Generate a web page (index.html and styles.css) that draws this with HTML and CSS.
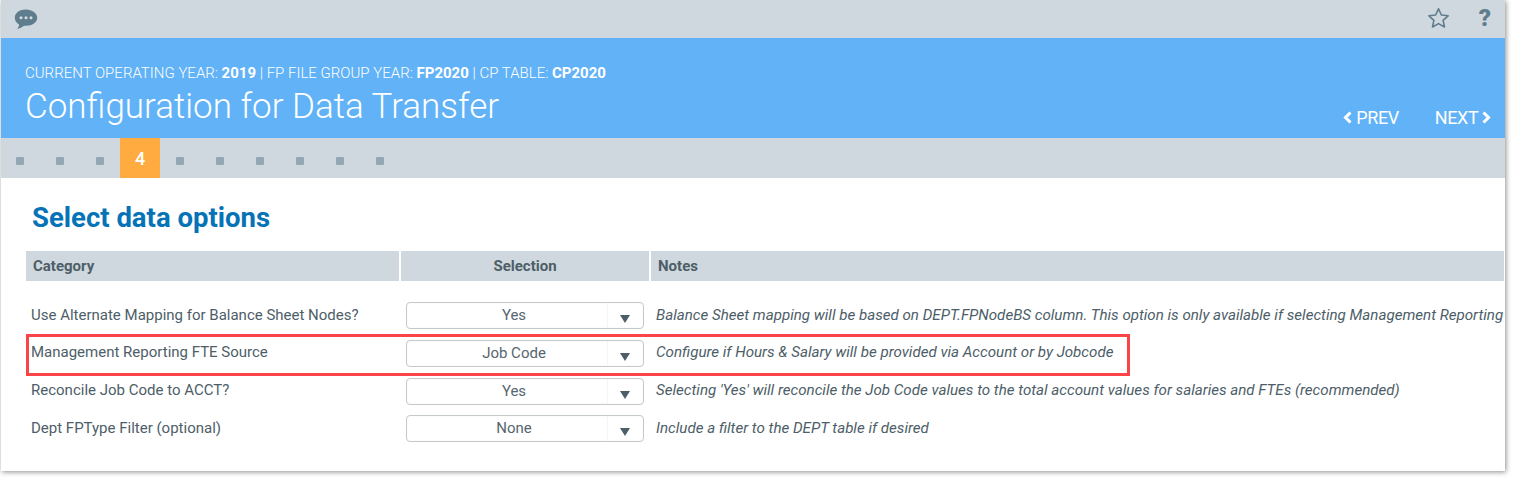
FILE: index.html
```html
<!DOCTYPE html>
<html lang="en">
<head>
  <meta charset="UTF-8" />
  <title>Configuration for Data Transfer</title>
  <link rel="stylesheet" href="styles.css">
</head>
<body>
  <div class="window">
    <div class="topbar">
      <svg class="chat-icon" width="24" height="21" viewBox="0 0 24 21">
        <path d="M12 0.5C5.6 0.5 0.8 3.9 0.8 8.8c0 3 1.8 5.4 4.4 6.9-.2 1.5-1 3-2.1 4 2.6-.2 5.1-1.400 6.900-3 .7.1 1.300.1 2 .1 6.300 0 11.200-3.500 11.200-8S18.300.5 12 .5z" fill="#5f7d8c"/>
        <circle cx="7" cy="8.700" r="1.500" fill="#d5dde2"/>
        <circle cx="12" cy="8.700" r="1.500" fill="#d5dde2"/>
        <circle cx="17" cy="8.700" r="1.500" fill="#d5dde2"/>
      </svg>
      <div class="top-actions">
        <svg class="star-icon" width="23" height="21" viewBox="0 0 23 21">
          <path d="M11.500 1.800l2.900 6.200 6.700.8-5 4.600 1.400 6.600-6-3.400-6 3.400 1.400-6.600-5-4.600 6.700-.8z" fill="none" stroke="#5f7d8c" stroke-width="1.600" stroke-linejoin="round"/>
        </svg>
        <span class="help">?</span>
      </div>
    </div>

    <div class="header">
      <div class="header-text">
        <div class="meta">CURRENT OPERATING YEAR: <b>2019</b> | FP FILE GROUP YEAR: <b>FP2020</b> | CP TABLE: <b>CP2020</b></div>
        <h1>Configuration for Data Transfer</h1>
      </div>
      <div class="pager">
        <span class="pager-link">
          <svg width="9" height="13" viewBox="0 0 9 13"><path d="M7.500 1.500L2.500 6.500l5 5" fill="none" stroke="#fff" stroke-width="3"/></svg>
          PREV
        </span>
        <span class="pager-link">
          NEXT
          <svg width="9" height="13" viewBox="0 0 9 13"><path d="M1.500 1.500l5 5-5 5" fill="none" stroke="#fff" stroke-width="3"/></svg>
        </span>
      </div>
    </div>

    <div class="steps">
      <div class="step"><i></i></div>
      <div class="step"><i></i></div>
      <div class="step"><i></i></div>
      <div class="step active">4</div>
      <div class="step"><i></i></div>
      <div class="step"><i></i></div>
      <div class="step"><i></i></div>
      <div class="step"><i></i></div>
      <div class="step"><i></i></div>
      <div class="step"><i></i></div>
    </div>

    <div class="content">
      <h2>Select data options</h2>

      <div class="table-head">
        <div class="th">Category</div>
        <div class="th center">Selection</div>
        <div class="th">Notes</div>
      </div>

      <div class="rows">
        <div class="row">
          <div class="category">Use Alternate Mapping for Balance Sheet Nodes?</div>
          <div class="select"><span class="value">Yes</span><span class="arrow"></span></div>
          <div class="note">Balance Sheet mapping will be based on DEPT.FPNodeBS column. This option is only available if selecting Management Reporting</div>
        </div>
        <div class="row">
          <div class="category">Management Reporting FTE Source</div>
          <div class="select"><span class="value">Job Code</span><span class="arrow"></span></div>
          <div class="note">Configure if Hours &amp; Salary will be provided via Account or by Jobcode</div>
        </div>
        <div class="row">
          <div class="category">Reconcile Job Code to ACCT?</div>
          <div class="select"><span class="value">Yes</span><span class="arrow"></span></div>
          <div class="note">Selecting 'Yes' will reconcile the Job Code values to the total account values for salaries and FTEs (recommended)</div>
        </div>
        <div class="row">
          <div class="category">Dept FPType Filter (optional)</div>
          <div class="select"><span class="value">None</span><span class="arrow"></span></div>
          <div class="note">Include a filter to the DEPT table if desired</div>
        </div>
      </div>

      <div class="callout"></div>
    </div>
  </div>
</body>
</html>
```

FILE: styles.css
```css
* {
  box-sizing: border-box;
}
html, body {
  height: 100%;
}
body {
  margin: 0;
  background: #fff;
  font-family: Roboto, "Liberation Sans", sans-serif;
  color: #4d5e68;
}
.window {
  width: 1504px;
  height: 471px;
  margin-left: 1px;
  background: #fff;
  box-shadow: 1px 1px 5px rgba(0, 0, 0, 0.45);
  overflow: hidden;
}
.topbar {
  height: 38px;
  background: #cfd8de;
  display: flex;
  justify-content: space-between;
  align-items: center;
  padding: 0 14px 0 13px;
}
.chat-icon {
  margin-top: 1px;
}
.top-actions {
  display: flex;
  align-items: center;
  gap: 29px;
  margin-bottom: 3px;
}
.star-icon {
  margin-bottom: 1px;
}
.help {
  font-size: 24px;
  font-weight: 900;
  color: #5f7d8c;
  line-height: 24px;
}
.header {
  height: 100px;
  background: #61b2f6;
  color: #fff;
  display: flex;
  justify-content: space-between;
  padding: 0 14px 0 24px;
}
.header-text {
  padding-top: 27px;
}
.meta {
  font-size: 15px;
  font-weight: 300;
  line-height: 17px;
}
.meta b {
  font-weight: 700;
}
h1 {
  margin: 3px 0 0;
  font-size: 35px;
  font-weight: 300;
  line-height: 44px;
}
.pager {
  display: flex;
  gap: 36px;
  padding-top: 69px;
}
.pager-link {
  font-size: 18px;
  font-weight: 400;
  line-height: 22px;
  letter-spacing: -0.4px;
}
.steps {
  height: 40px;
  background: #cfd8de;
  display: flex;
  margin-left: -1px;
}
.step {
  width: 40px;
  display: flex;
  justify-content: center;
  align-items: center;
}
.step i {
  width: 8px;
  height: 8px;
  margin-top: 5px;
  border-radius: 1px;
  background: #94a8b4;
}
.step.active {
  background: #ffab40;
  color: #fff;
  font-size: 18px;
  font-weight: 500;
}
.content {
  position: relative;
  padding: 0 1px 0 25px;
}
h2 {
  margin: 0;
  padding: 23px 0 0 6px;
  height: 73px;
  font-size: 27.500px;
  font-weight: 700;
  line-height: 34px;
  color: #0673b7;
}
.table-head {
  display: grid;
  grid-template-columns: 373px 248px 1fr;
  gap: 2px;
  height: 30px;
}
.th {
  background: #cfd8de;
  padding-left: 7px;
  font-size: 15px;
  font-weight: 700;
  line-height: 30px;
  color: #4d5e68;
}
.th.center {
  padding-left: 0;
  text-align: center;
}
.rows {
  padding-top: 21px;
  display: flex;
  flex-direction: column;
  gap: 10.750px;
}
.row {
  display: grid;
  grid-template-columns: 380px 238px 1fr;
  height: 27px;
  align-items: center;
}
.category {
  padding-left: 5px;
  font-size: 15px;
  line-height: 24px;
  margin-top: -2px;
}
.select {
  height: 27px;
  border: 1px solid #c4c9cc;
  border-radius: 4px;
  display: flex;
  font-size: 15px;
  line-height: 25px;
  color: #56666f;
  box-shadow: inset 0 0 3px rgba(0, 0, 0, 0.04);
}
.value {
  flex: 1;
  text-align: center;
  padding-left: 14px;
}
.arrow {
  width: 36px;
  border-left: 1px solid #f4f5f6;
  position: relative;
}
.arrow::after {
  content: "";
  position: absolute;
  left: 12px;
  top: 12px;
  border-left: 5px solid transparent;
  border-right: 5px solid transparent;
  border-top: 8px solid #4d5e68;
}
.note {
  padding-left: 12px;
  font-size: 15.130px;
  font-style: italic;
  white-space: nowrap;
  margin-top: -2px;
}
.callout {
  position: absolute;
  left: 25px;
  top: 156px;
  width: 1104px;
  height: 42px;
  border: 3px solid #fb4448;
}
```
